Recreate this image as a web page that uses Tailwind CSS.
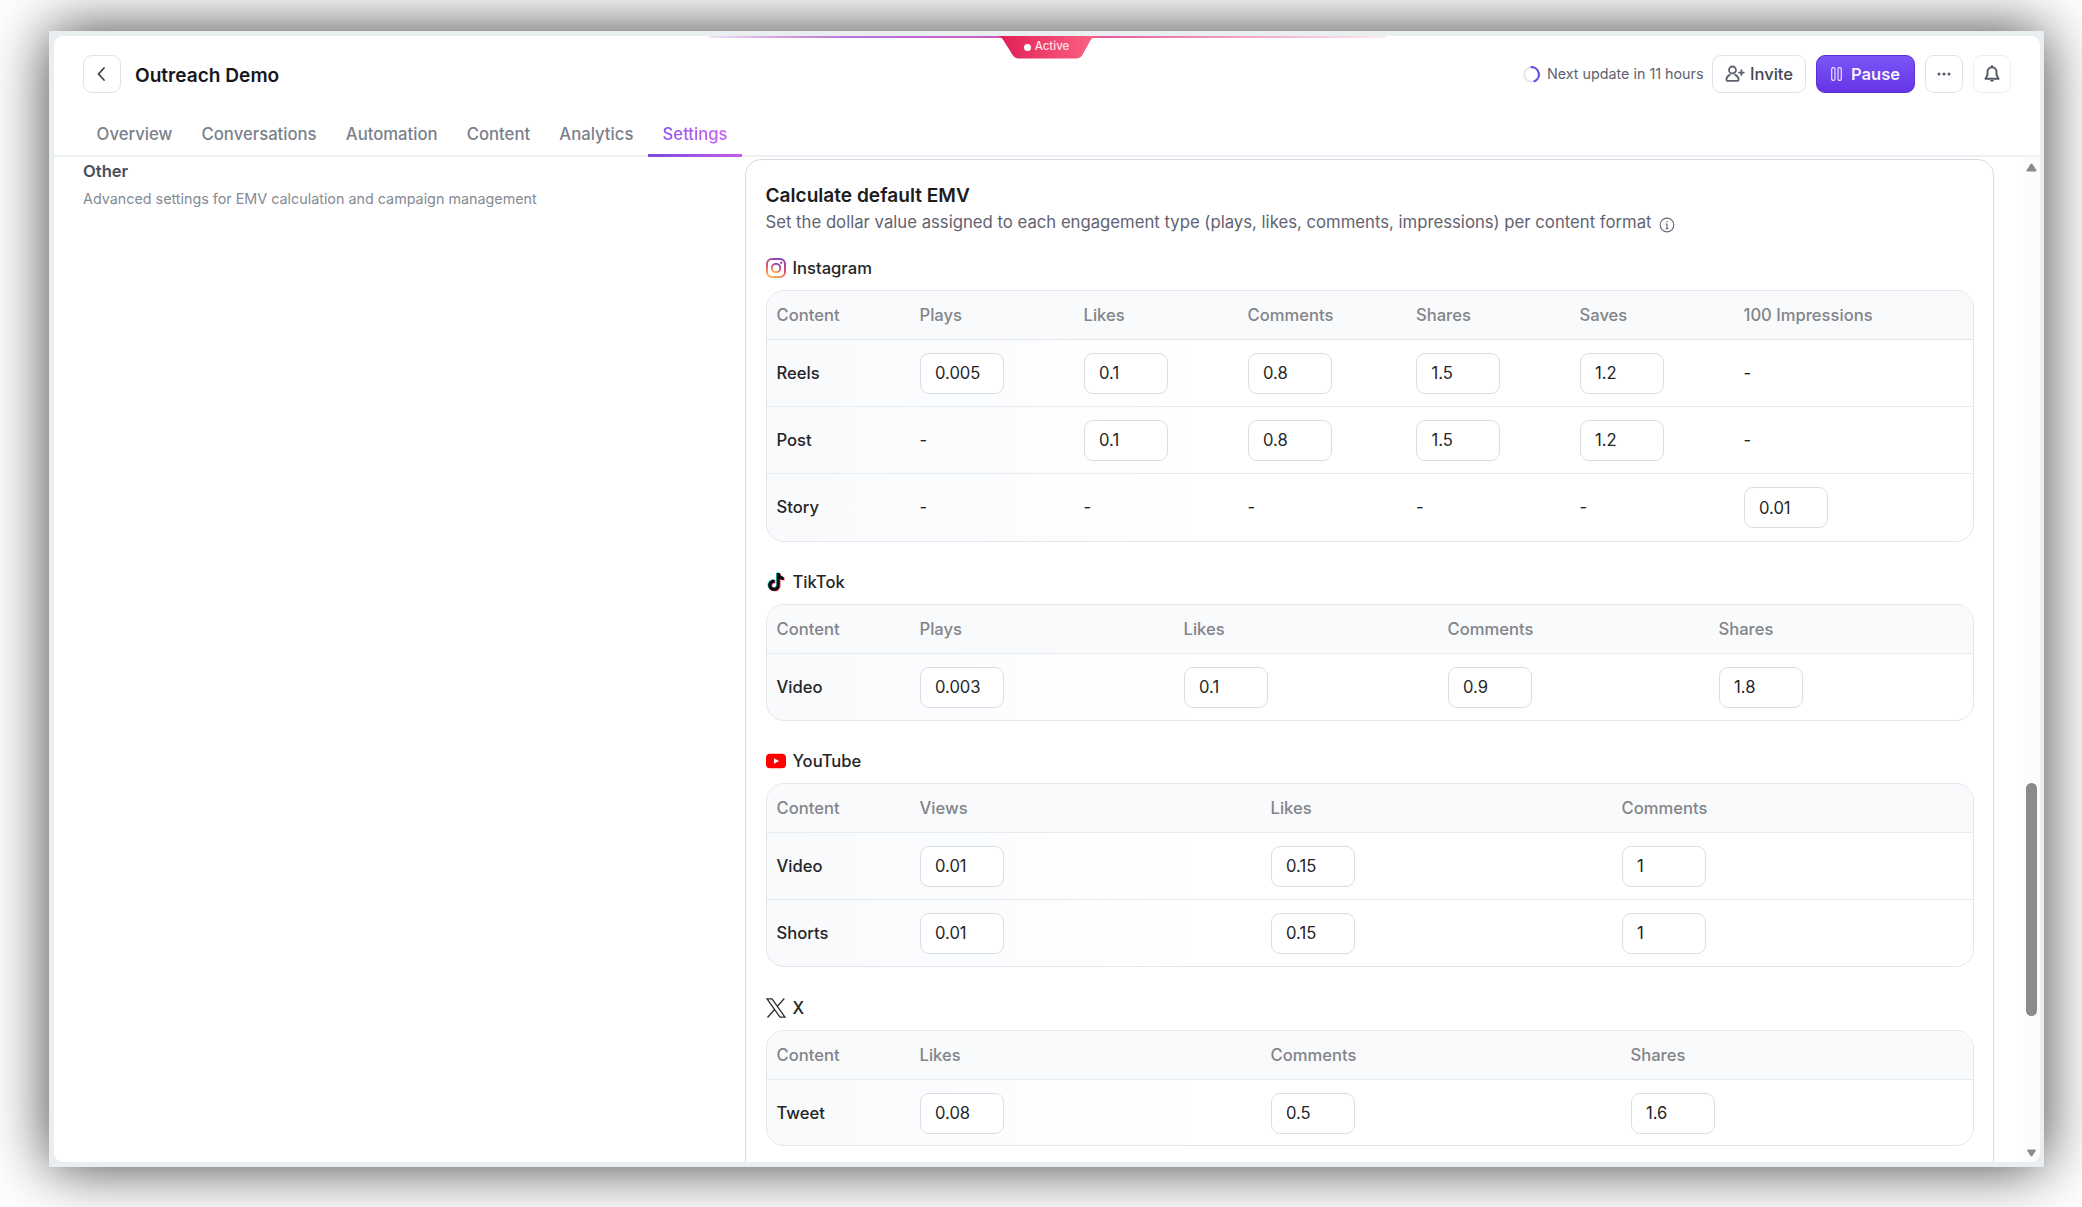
<!DOCTYPE html>
<html lang="en">
<head>
    <meta charset="UTF-8">
    <meta name="viewport" content="width=device-width, initial-scale=1.0">
    <title>Outreach Demo - Settings</title>
    <script src="https://cdn.jsdelivr.net/npm/@tailwindcss/browser@4"></script>
</head>
<body class="bg-white font-['Inter',sans-serif] text-[#242528] overflow-hidden">
    <div class="w-[2082px] h-[1207px] pt-[31px] pl-[49px] overflow-hidden">
        <div class="w-[1995px] h-[1136px] bg-[#e9eef0] pt-[5px] pl-[5px] shadow-[0_0_57px_rgba(0,0,0,0.76)]">
            <div class="relative w-[1986px] h-[1126px] bg-white rounded-[9px] overflow-hidden flex flex-col">

                <!-- Status badge -->
                <div class="absolute top-0 left-[655px] w-[677px] h-[1.5px] bg-linear-to-r from-[#b46be0]/10 via-[#e0408c] to-[#f43f5e]/10">
                    <div class="w-[300px] h-full bg-linear-to-r from-[#c9b6ec]/20 via-[#bb72d8] to-[#c95cc0]"></div>
                </div>
                <div class="absolute top-0 left-[944px] w-[98px] h-[23px]">
                    <svg class="absolute inset-0" width="98" height="23" viewBox="0 0 98 23">
                        <defs>
                            <linearGradient id="badge" x1="0" y1="0" x2="1" y2="0">
                                <stop offset="0" stop-color="#e11d55"/>
                                <stop offset="1" stop-color="#fb6484"/>
                            </linearGradient>
                        </defs>
                        <path fill="url(#badge)" d="M0 0H98C95 1 93 3 91.500 6L85 18C83 21.500 81 22.500 78 22.500H21C18 22.500 16 21.500 14 18L6.500 6C5 3 3 1 0 0Z"/>
                    </svg>
                    <div class="relative flex items-center justify-center gap-1 h-[22px] pr-px text-[11.5px] font-medium text-white/85">
                        <span class="size-[7px] rounded-full bg-white"></span>Active
                    </div>
                </div>

                <!-- Header -->
                <header class="h-[121px] shrink-0 border-b-2 border-[#eff2f5]">
                    <div class="flex items-center h-[38px] mt-[19px] pl-[29px] pr-[29px]">
                        <button class="size-[38px] border-[1.5px] border-[#dfe2ea] rounded-[9px] flex items-center justify-center">
                            <svg width="20" height="20" viewBox="0 0 20 20" fill="none" stroke="#3f4350" stroke-width="1.8" stroke-linecap="round" stroke-linejoin="round"><path d="M12 4L6.500 10L12 16"/></svg>
                        </button>
                        <h1 class="ml-[14px] mt-[2px] text-[19.1px] font-semibold text-[#16171a]">Outreach Demo</h1>
                        <div class="ml-auto flex items-center">
                            <svg width="17" height="17" viewBox="0 0 17 17" fill="none" stroke-width="2">
                                <circle cx="8.500" cy="8.500" r="7.300" stroke="#e6e8f0"/>
                                <path d="M8.500 1.200A7.300 7.300 0 0 1 11.500 15.200" stroke="#6d4aed" stroke-width="2.200" stroke-linecap="round"/>
                            </svg>
                            <span class="ml-[7px] w-[165px] text-[14.3px] text-[#5d626f] whitespace-nowrap">Next update in 11 hours</span>
                            <button class="w-[94px] h-[38px] border-[1.5px] border-[#dfe2ea] rounded-[9px] flex items-center justify-center gap-[5px] text-[16.6px] font-medium text-[#444853]">
                                <svg width="20" height="18" viewBox="0 0 20 18" fill="none" stroke="#5d6270" stroke-width="1.800" stroke-linecap="round" stroke-linejoin="round"><circle cx="7.500" cy="5" r="3.500"/><path d="M4.800 9.800C2.500 10.800 1.400 12.500 1.400 14.700C1.400 15.400 1.800 15.800 2.400 15.800H12.600C13.200 15.800 13.600 15.400 13.600 14.700C13.600 12.500 12.500 10.800 10.200 9.800M16.400 5.200V10M14 7.600H18.800"/></svg>
                                Invite
                            </button>
                            <button class="ml-[10px] w-[99px] h-[38px] rounded-[9px] border border-[#5b2fd6] bg-linear-to-b from-[#7b55f7] to-[#6434e4] flex items-center justify-center gap-[9px] text-[16.6px] font-semibold text-white/95">
                                <svg width="11" height="14" viewBox="0 0 11 14" fill="none" stroke="#e9e2ff" stroke-width="1.200"><rect x="0.700" y="0.700" width="3.300" height="12.600" rx="1.300"/><rect x="7" y="0.700" width="3.300" height="12.600" rx="1.300"/></svg>
                                Pause
                            </button>
                            <button class="ml-[10px] size-[38px] border-[1.5px] border-[#dfe2ea] rounded-[9px] flex items-center justify-center">
                                <svg width="16" height="4" viewBox="0 0 16 4" fill="#555a66"><circle cx="3" cy="2" r="1.500"/><circle cx="8" cy="2" r="1.500"/><circle cx="13" cy="2" r="1.500"/></svg>
                            </button>
                            <button class="ml-[10px] size-[38px] border-[1.5px] border-[#eceef3] rounded-[9px] flex items-center justify-center">
                                <svg width="16" height="18" viewBox="0 0 16 18" fill="none" stroke="#555a66" stroke-width="1.900" stroke-linecap="round" stroke-linejoin="round"><path d="M8 1V2.200M8 2.200C5.200 2.200 3.500 4.300 3.500 6.800V10L1.400 13.700H14.600L12.500 10V6.800C12.500 4.300 10.800 2.200 8 2.200Z"/><path d="M6 15H10C9.700 17.300 6.300 17.300 6 15Z" fill="#555a66" stroke="none"/></svg>
                            </button>
                        </div>
                    </div>
                    <nav class="flex mt-[21px] pl-[28px] h-[43px] text-[16.7px] font-medium text-[#7a7f8b]">
                        <a class="px-[14.6px] pt-2">Overview</a>
                        <a class="px-[14.6px] pt-2">Conversations</a>
                        <a class="px-[14.6px] pt-2">Automation</a>
                        <a class="px-[14.6px] pt-2">Content</a>
                        <a class="px-[14.6px] pt-2">Analytics</a>
                        <a class="relative px-[14.6px] pt-2">
                            <span class="bg-linear-to-r from-[#9052f2] to-[#c95cf0] bg-clip-text text-transparent">Settings</span>
                            <span class="absolute left-0 right-0 bottom-0 h-[3px] bg-linear-to-r from-[#7a4be0] to-[#c65be6]"></span>
                        </a>
                    </nav>
                </header>

                <!-- Body -->
                <div class="flex-1 min-h-0 flex">
                    <aside class="w-[691px] shrink-0 pl-[29px] pt-[2px]">
                        <h2 class="text-[16.6px] leading-6 font-semibold text-[#4a4e5a]">Other</h2>
                        <p class="mt-[6px] text-[14.33px] leading-5 text-[#858a94]">Advanced settings for EMV calculation and campaign management</p>
                    </aside>

                    <section class="w-[1249px] h-[1100px] mt-[2px] border-[1.5px] border-[#d6dae3] rounded-[16px] px-[19.5px] pt-[23px]">
                        <h3 class="text-[19.1px] leading-6 font-semibold text-[#1b1c20]">Calculate default EMV</h3>
                        <div class="flex items-center mt-[4px] h-6 text-[16.72px] text-[#5f6371] whitespace-nowrap">
                            Set the dollar value assigned to each engagement type (plays, likes, comments, impressions) per content format
                            <svg class="ml-[7px] mt-[3px]" width="16" height="16" viewBox="0 0 16 16" fill="none" stroke="#6b6f7c" stroke-width="1.200"><circle cx="8" cy="8" r="6.800"/><path d="M8 7V11.600M6.800 7.200H8M6.600 11.600H9.400M8 4.100V5.500"/></svg>
                        </div>

                        <!-- Instagram -->
                        <div class="flex items-center gap-[7px] mt-[21px] h-6 text-[16.6px] font-medium">
                            <svg width="20" height="20" viewBox="0 0 20 20" fill="none">
                                <defs>
                                    <linearGradient id="ig" x1="0.300" y1="1" x2="0.700" y2="0">
                                        <stop offset="0" stop-color="#fbb05a"/>
                                        <stop offset="0.500" stop-color="#e0506f"/>
                                        <stop offset="1" stop-color="#8a46bd"/>
                                    </linearGradient>
                                </defs>
                                <rect x="1" y="1" width="18" height="18" rx="5" stroke="url(#ig)" stroke-width="2"/>
                                <circle cx="10" cy="10" r="4.200" stroke="url(#ig)" stroke-width="1.900"/>
                                <circle cx="15.200" cy="4.800" r="1.200" fill="#b0489f"/>
                            </svg>
                            Instagram
                        </div>
                        <div class="mt-[10px] h-[252px] border border-[#e2e6ec] rounded-[18px] overflow-hidden text-[16.6px] bg-linear-to-r from-[#f8fafc] to-white to-35%">
                            <div class="grid grid-cols-[143px_164px_164px_168.5px_163.5px_164px_1fr] items-center h-[49px] px-2.5 bg-[#f9fafc] border-b border-[#e2e6ec] text-[#828489] font-medium">
                                <div>Content</div><div>Plays</div><div>Likes</div><div>Comments</div><div>Shares</div><div>Saves</div><div>100 Impressions</div>
                            </div>
                            <div class="grid grid-cols-[143px_164px_164px_168.5px_163.5px_164px_1fr] items-center h-[67px] px-2.5 border-b border-[#e9ecf2]">
                                <div class="font-medium">Reels</div>
                                <div><input class="w-[84px] h-[41px] px-[14.5px] bg-white border-[1.5px] border-[#d9dee6] rounded-[9px]" value="0.005"></div>
                                <div><input class="w-[84px] h-[41px] px-[14.5px] bg-white border-[1.5px] border-[#d9dee6] rounded-[9px]" value="0.1"></div>
                                <div><input class="w-[84px] h-[41px] px-[14.5px] bg-white border-[1.5px] border-[#d9dee6] rounded-[9px]" value="0.8"></div>
                                <div><input class="w-[84px] h-[41px] px-[14.5px] bg-white border-[1.5px] border-[#d9dee6] rounded-[9px]" value="1.5"></div>
                                <div><input class="w-[84px] h-[41px] px-[14.5px] bg-white border-[1.5px] border-[#d9dee6] rounded-[9px]" value="1.2"></div>
                                <div>-</div>
                            </div>
                            <div class="grid grid-cols-[143px_164px_164px_168.5px_163.5px_164px_1fr] items-center h-[67px] px-2.5 border-b border-[#e9ecf2]">
                                <div class="font-medium">Post</div>
                                <div>-</div>
                                <div><input class="w-[84px] h-[41px] px-[14.5px] bg-white border-[1.5px] border-[#d9dee6] rounded-[9px]" value="0.1"></div>
                                <div><input class="w-[84px] h-[41px] px-[14.5px] bg-white border-[1.5px] border-[#d9dee6] rounded-[9px]" value="0.8"></div>
                                <div><input class="w-[84px] h-[41px] px-[14.5px] bg-white border-[1.5px] border-[#d9dee6] rounded-[9px]" value="1.5"></div>
                                <div><input class="w-[84px] h-[41px] px-[14.5px] bg-white border-[1.5px] border-[#d9dee6] rounded-[9px]" value="1.2"></div>
                                <div>-</div>
                            </div>
                            <div class="grid grid-cols-[143px_164px_164px_168.5px_163.5px_164px_1fr] items-center h-[67px] px-2.5">
                                <div class="font-medium">Story</div>
                                <div>-</div><div>-</div><div>-</div><div>-</div><div>-</div>
                                <div><input class="w-[84px] h-[41px] px-[14.5px] bg-white border-[1.5px] border-[#d9dee6] rounded-[9px]" value="0.01"></div>
                            </div>
                        </div>

                        <!-- TikTok -->
                        <div class="flex items-center gap-[7px] mt-[28px] h-6 text-[16.6px] font-medium">
                            <svg width="20" height="20" viewBox="0 0 20 20">
                                <path fill="#25e4dd" d="M10 0.500H13C13.200 2.800 14.600 4.200 17 4.400V7.400C15.500 7.400 14.200 7 13 6.200V12.500C13 16 10.600 18.300 7.400 18.300C4.200 18.300 1.500 16 1.500 12.700C1.500 9.300 4.400 6.800 7.900 7.200V10.400C6.200 10 4.700 11 4.700 12.700C4.700 14.200 5.900 15.200 7.300 15.200C8.900 15.200 10 14.200 10 12.300Z"/>
                                <path fill="#fe2c55" d="M11.500 1.500H14.500C14.700 3.800 16.100 5.200 18.500 5.400V8.400C17 8.400 15.700 8 14.500 7.200V13.500C14.500 17 12.100 19.300 8.900 19.300C5.700 19.300 3 17 3 13.700C3 10.300 5.900 7.800 9.400 8.200V11.400C7.700 11 6.200 12 6.200 13.700C6.200 15.200 7.400 16.200 8.800 16.200C10.400 16.200 11.500 15.200 11.500 13.300Z"/>
                                <path fill="#0b0b0c" d="M10.700 1H13.700C13.900 3.300 15.300 4.700 17.700 4.900V7.900C16.200 7.900 14.900 7.500 13.700 6.700V13C13.700 16.500 11.300 18.800 8.100 18.800C4.900 18.800 2.200 16.500 2.200 13.200C2.200 9.800 5.100 7.300 8.600 7.700V10.900C6.900 10.500 5.400 11.500 5.400 13.200C5.400 14.700 6.600 15.700 8 15.700C9.600 15.700 10.700 14.700 10.700 12.800Z"/>
                            </svg>
                            TikTok
                        </div>
                        <div class="mt-[10px] h-[117px] border border-[#e2e6ec] rounded-[18px] overflow-hidden text-[16.6px] bg-linear-to-r from-[#f8fafc] to-white to-35%">
                            <div class="grid grid-cols-[143px_264px_264px_271px_1fr] items-center h-[49px] px-2.5 bg-[#f9fafc] border-b border-[#e8ebf0] text-[#828489] font-medium">
                                <div>Content</div><div>Plays</div><div>Likes</div><div>Comments</div><div>Shares</div>
                            </div>
                            <div class="grid grid-cols-[143px_264px_264px_271px_1fr] items-center h-[66px] px-2.5">
                                <div class="font-medium">Video</div>
                                <div><input class="w-[84px] h-[41px] px-[14.5px] bg-white border-[1.5px] border-[#d9dee6] rounded-[9px]" value="0.003"></div>
                                <div><input class="w-[84px] h-[41px] px-[14.5px] bg-white border-[1.5px] border-[#d9dee6] rounded-[9px]" value="0.1"></div>
                                <div><input class="w-[84px] h-[41px] px-[14.5px] bg-white border-[1.5px] border-[#d9dee6] rounded-[9px]" value="0.9"></div>
                                <div><input class="w-[84px] h-[41px] px-[14.5px] bg-white border-[1.5px] border-[#d9dee6] rounded-[9px]" value="1.8"></div>
                            </div>
                        </div>

                        <!-- YouTube -->
                        <div class="flex items-center gap-[7px] mt-[28px] h-6 text-[16.6px] font-medium">
                            <svg width="20" height="20" viewBox="0 0 20 20"><rect y="2.800" width="20" height="14.400" rx="4" fill="#fe0000"/><path fill="#ffffff" d="M8 7.200L13 10L8 12.800Z"/></svg>
                            YouTube
                        </div>
                        <div class="mt-[10px] h-[184px] border border-[#e2e6ec] rounded-[18px] overflow-hidden text-[16.6px] bg-linear-to-r from-[#f8fafc] to-white to-35%">
                            <div class="grid grid-cols-[143px_351px_351px_1fr] items-center h-[49px] px-2.5 bg-[#f9fafc] border-b border-[#e8ebf0] text-[#828489] font-medium">
                                <div>Content</div><div>Views</div><div>Likes</div><div>Comments</div>
                            </div>
                            <div class="grid grid-cols-[143px_351px_351px_1fr] items-center h-[67px] px-2.5 border-b border-[#e6e9ef]">
                                <div class="font-medium">Video</div>
                                <div><input class="w-[84px] h-[41px] px-[14.5px] bg-white border-[1.5px] border-[#d9dee6] rounded-[9px]" value="0.01"></div>
                                <div><input class="w-[84px] h-[41px] px-[14.5px] bg-white border-[1.5px] border-[#d9dee6] rounded-[9px]" value="0.15"></div>
                                <div><input class="w-[84px] h-[41px] px-[14.5px] bg-white border-[1.5px] border-[#d9dee6] rounded-[9px]" value="1"></div>
                            </div>
                            <div class="grid grid-cols-[143px_351px_351px_1fr] items-center h-[66px] px-2.5">
                                <div class="font-medium">Shorts</div>
                                <div><input class="w-[84px] h-[41px] px-[14.5px] bg-white border-[1.5px] border-[#d9dee6] rounded-[9px]" value="0.01"></div>
                                <div><input class="w-[84px] h-[41px] px-[14.5px] bg-white border-[1.5px] border-[#d9dee6] rounded-[9px]" value="0.15"></div>
                                <div><input class="w-[84px] h-[41px] px-[14.5px] bg-white border-[1.5px] border-[#d9dee6] rounded-[9px]" value="1"></div>
                            </div>
                        </div>

                        <!-- X -->
                        <div class="flex items-center gap-[7px] mt-[29px] h-6 text-[16.6px] font-medium">
                            <svg width="20" height="20" viewBox="0 0 20 20" fill="none" stroke="#2b2b2e" stroke-width="1.300"><path d="M1 0.800H6L19 19.200H14ZM18.300 0.500L11.300 8.400M8.600 11.500L1.500 19.500"/></svg>
                            X
                        </div>
                        <div class="mt-[10px] h-[116px] border border-[#e2e6ec] rounded-[18px] overflow-hidden text-[16.6px] bg-linear-to-r from-[#f8fafc] to-white to-35%">
                            <div class="grid grid-cols-[143px_351px_360px_1fr] items-center h-[49px] px-2.5 bg-[#f9fafc] border-b border-[#e8ebf0] text-[#828489] font-medium">
                                <div>Content</div><div>Likes</div><div>Comments</div><div>Shares</div>
                            </div>
                            <div class="grid grid-cols-[143px_351px_360px_1fr] items-center h-[66px] px-2.5">
                                <div class="font-medium">Tweet</div>
                                <div><input class="w-[84px] h-[41px] px-[14.5px] bg-white border-[1.5px] border-[#d9dee6] rounded-[9px]" value="0.08"></div>
                                <div><input class="w-[84px] h-[41px] px-[14.5px] bg-white border-[1.5px] border-[#d9dee6] rounded-[9px]" value="0.5"></div>
                                <div><input class="w-[84px] h-[41px] px-[14.5px] bg-white border-[1.5px] border-[#d9dee6] rounded-[9px]" value="1.6"></div>
                            </div>
                        </div>
                    </section>

                    <!-- Scrollbar -->
                    <div class="ml-auto w-[17px] bg-[#fcfcfc] flex flex-col items-center pt-[6px] pb-[5px]">
                        <svg width="11" height="9" viewBox="0 0 11 9" fill="#8b8b8b"><path d="M5.500 0.500Q6 0.500 6.500 1.200L10.500 7.200Q10.700 8.500 9.500 8.500H1.500Q0.300 8.500 0.500 7.200L4.500 1.200Q5 0.500 5.500 0.500Z"/></svg>
                        <div class="mt-[611px] w-[11px] h-[233px] rounded-full bg-[#8b8b8b]"></div>
                        <svg class="mt-auto" width="11" height="8" viewBox="0 0 11 9" fill="#8b8b8b"><path d="M5.500 8.500Q6 8.500 6.500 7.800L10.500 1.800Q10.700 0.500 9.500 0.500H1.500Q0.300 0.500 0.500 1.800L4.500 7.800Q5 8.500 5.500 8.500Z"/></svg>
                    </div>
                </div>
            </div>
        </div>
    </div>
</body>
</html>
